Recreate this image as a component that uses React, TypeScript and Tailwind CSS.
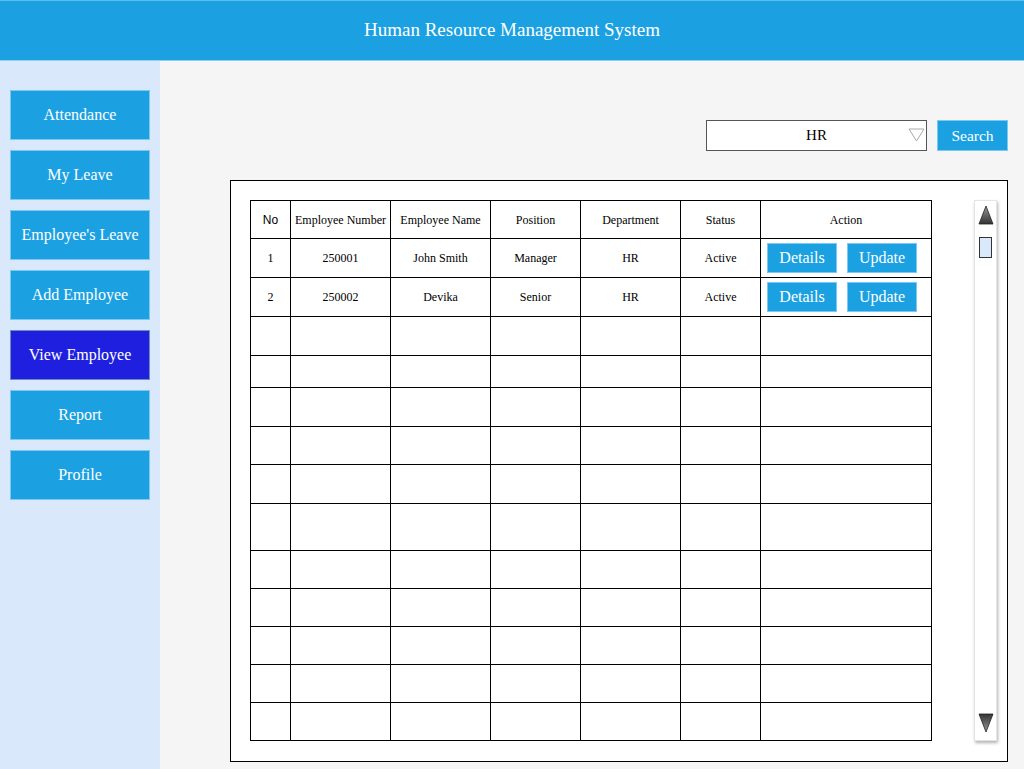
import React from "react";

const menu = [
  "Attendance",
  "My Leave",
  "Employee's Leave",
  "Add Employee",
  "View Employee",
  "Report",
  "Profile",
];

const cols = [40, 100, 100, 90, 100, 80, 171];
const headers = ["No", "Employee Number", "Employee Name", "Position", "Department", "Status", "Action"];
const data = [
  ["1", "250001", "John Smith", "Manager", "HR", "Active"],
  ["2", "250002", "Devika", "Senior", "HR", "Active"],
];
const emptyHeights = [39, 32, 39, 38, 39, 47, 38, 38, 38, 38, 38];

const serif = { fontFamily: '"Liberation Serif", "Times New Roman", serif' };

function ActionBtn({ label }: { label: string }) {
  return (
    <div className="w-[70px] h-[30px] bg-[#1ba1e2] border border-[#7cc8f2] text-white text-[16px] flex items-center justify-center">
      {label}
    </div>
  );
}

export default function App() {
  return (
    <div className="w-[1024px] h-[769px] flex flex-col overflow-hidden" style={serif}>
      <div className="h-[61px] bg-[#1ba1e2] border-t border-[#5bbcef] border-b border-b-[#8ccff5] flex items-center justify-center text-white text-[19px]">
        Human Resource Management System
      </div>
      <div className="flex flex-1">
        <div className="w-[160px] bg-[#dae8fc] pt-[29px] px-[10px] flex flex-col gap-[10px]">
          {menu.map((m) => (
            <div
              key={m}
              className={
                "h-[50px] flex items-center justify-center text-white text-[16px] border " +
                (m === "View Employee"
                  ? "bg-[#1f1fe0] border-[#6c8ebf]"
                  : "bg-[#1ba1e2] border-[#7cc8f2]")
              }
            >
              {m}
            </div>
          ))}
        </div>
        <div className="flex-1 bg-[#f5f5f5] flex flex-col">
          <div className="mt-[59px] flex justify-end pr-[16px] gap-[10px]">
            <div className="w-[221px] h-[31px] bg-white border border-[#555] relative flex items-center justify-center text-[15px] text-black">
              HR
              <svg className="absolute right-[1px] top-[7px]" width="17" height="14" viewBox="0 0 17 14">
                <path d="M1 1 L16 1 L8.5 13 Z" fill="white" stroke="#aaa" strokeWidth="1" />
              </svg>
            </div>
            <div className="w-[71px] h-[31px] bg-[#1ba1e2] border border-[#7cc8f2] text-white text-[15.5px] flex items-center justify-center">
              Search
            </div>
          </div>
          <div className="mt-[29px] ml-[70px] w-[778px] h-[582px] bg-white border border-black flex pt-[19px] pl-[19px]">
            <table className="border-collapse table-fixed text-[12px] text-black h-fit" style={{ width: 681 }}>
              <colgroup>
                {cols.map((w, i) => (
                  <col key={i} style={{ width: w }} />
                ))}
              </colgroup>
              <tbody>
                <tr style={{ height: 38 }}>
                  {headers.map((h, i) => (
                    <td
                      key={h}
                      className="border border-black text-center p-0"
                      style={i === 0 ? { fontFamily: '"Liberation Sans", Arial, sans-serif' } : undefined}
                    >
                      {h}
                    </td>
                  ))}
                </tr>
                {data.map((r) => (
                  <tr key={r[0]} style={{ height: 39 }}>
                    {r.map((c, i) => (
                      <td key={i} className="border border-black text-center p-0">
                        {c}
                      </td>
                    ))}
                    <td className="border border-black p-0">
                      <div className="flex gap-[10px] pl-[6px]">
                        <ActionBtn label="Details" />
                        <ActionBtn label="Update" />
                      </div>
                    </td>
                  </tr>
                ))}
                {emptyHeights.map((h, idx) => (
                  <tr key={idx} style={{ height: h }}>
                    {cols.map((_, i) => (
                      <td key={i} className="border border-black p-0" />
                    ))}
                  </tr>
                ))}
              </tbody>
            </table>
            <div className="ml-[42px] w-[23px] h-[541px] bg-white shadow-[1px_2px_3px_rgba(0,0,0,0.3)] border border-[#e4e4e4] flex flex-col items-center pt-[4px]">
              <svg width="16" height="20" viewBox="0 0 16 20">
                <defs>
                  <linearGradient id="gu" x1="0" y1="0" x2="0" y2="1">
                    <stop offset="0" stopColor="#999" />
                    <stop offset="1" stopColor="#333" />
                  </linearGradient>
                </defs>
                <path d="M8 1 L15 19 L1 19 Z" fill="url(#gu)" stroke="#222" strokeWidth="0.8" />
              </svg>
              <div className="mt-[12px] w-[13px] h-[21px] bg-[#dae8fc] border border-[#333]" />
              <div className="flex-1" />
              <svg width="16" height="20" viewBox="0 0 16 20" className="mb-[7px]">
                <defs>
                  <linearGradient id="gd" x1="0" y1="0" x2="0" y2="1">
                    <stop offset="0" stopColor="#333" />
                    <stop offset="1" stopColor="#999" />
                  </linearGradient>
                </defs>
                <path d="M1 1 L15 1 L8 19 Z" fill="url(#gd)" stroke="#222" strokeWidth="0.8" />
              </svg>
            </div>
          </div>
        </div>
      </div>
    </div>
  );
}
